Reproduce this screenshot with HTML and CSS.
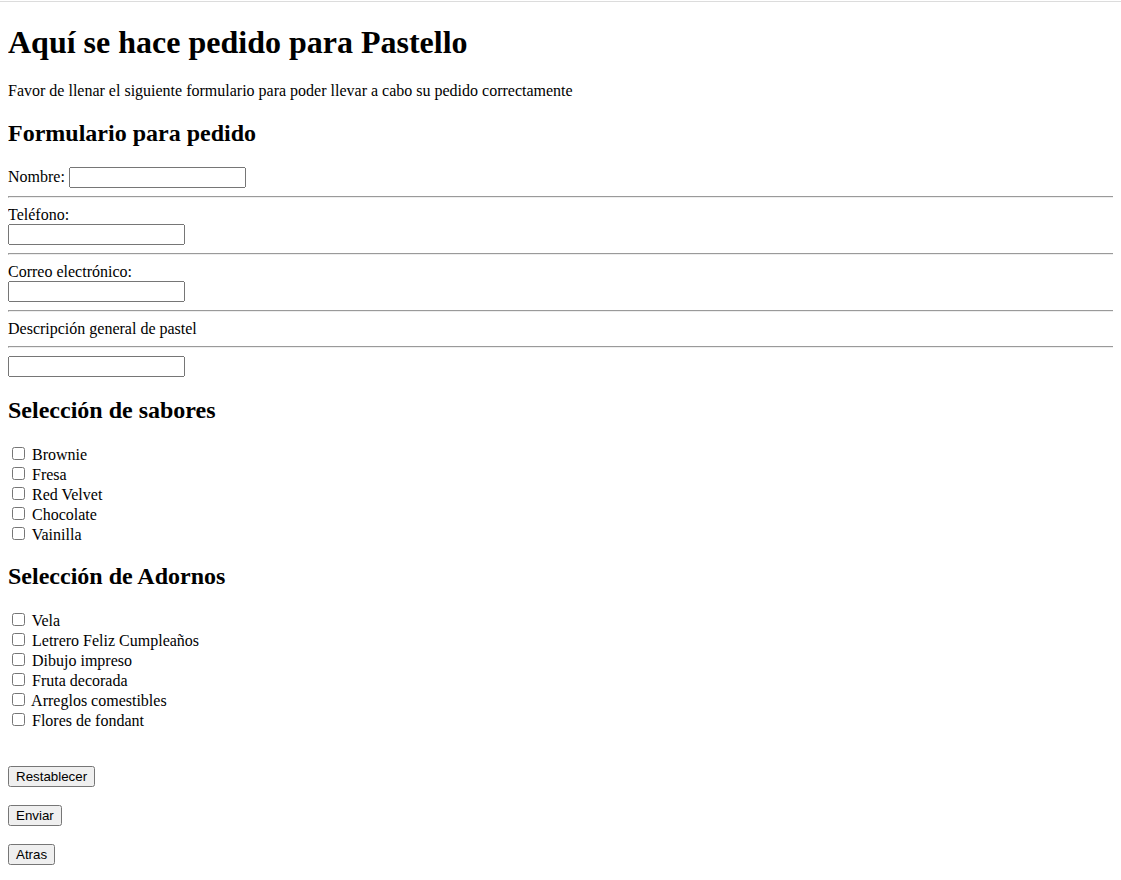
FILE: index.html
```html
<!DOCTYPE html>
<html lang="es">
<head>
<meta charset="utf-8">
<title>Pedido Pastello</title>
<link rel="stylesheet" href="styles.css">
</head>
<body>
<div class="topline"></div>
<h1>Aquí se hace pedido para Pastello</h1>
<p>Favor de llenar el siguiente formulario para poder llevar a cabo su pedido correctamente</p>
<form>
<h2>Formulario para pedido</h2>
<label>Nombre: <input type="text" class="field"></label>
<hr>
<label>Teléfono:<br><input type="tel" class="field"></label>
<hr>
<label>Correo electrónico:<br><input type="email" class="field"></label>
<hr>
<label>Descripción general de pastel</label>
<hr>
<input type="text" class="field">
<h2>Selección de sabores</h2>
<div class="checks flavors">
<label><input type="checkbox"> Brownie</label><br>
<label><input type="checkbox"> Fresa</label><br>
<label><input type="checkbox"> Red Velvet</label><br>
<label><input type="checkbox"> Chocolate</label><br>
<label><input type="checkbox"> Vainilla</label>
</div>
<h2>Selección de Adornos</h2>
<div class="checks">
<label><input type="checkbox"> Vela</label><br>
<label><input type="checkbox"> Letrero Feliz Cumpleaños</label><br>
<label><input type="checkbox"> Dibujo impreso</label><br>
<label><input type="checkbox"> Fruta decorada</label><br>
<label><input type="checkbox"> Arreglos comestibles</label><br>
<label><input type="checkbox"> Flores de fondant</label>
</div>
<br>
<p class="btn-row"><button type="reset" class="btn">Restablecer</button></p>
<p class="btn-row"><button type="submit" class="btn">Enviar</button></p>
<p class="btn-row"><button type="button" class="btn">Atras</button></p>
</form>
</body>
</html>
```

FILE: styles.css
```css
html {
  font-family: "Liberation Serif", "Times New Roman", serif;
  font-size: 16px;
  color: #000;
  background: #fff;
}
body {
  margin: 8px;
}
.topline {
  position: absolute;
  top: 1px;
  left: 0;
  right: 0;
  height: 1px;
  background: #dcdcdc;
}
h1 {
  font-size: 32px;
  margin: 16px 0 0.67em;
}
h2 {
  font-size: 24px;
  margin: 0.83em 0;
}
hr {
  margin-left: 0;
  margin-right: -3px;
}
.field {
  box-sizing: border-box;
  width: 177px;
  height: 21px;
  font-family: "Liberation Sans", Arial, sans-serif;
  font-size: 13.33px;
}
.flavors {
  margin-bottom: -1px;
}
.btn-row {
  margin: 18px 0;
}
.btn {
  font-family: "Liberation Sans", Arial, sans-serif;
  font-size: 13.33px;
}
```
